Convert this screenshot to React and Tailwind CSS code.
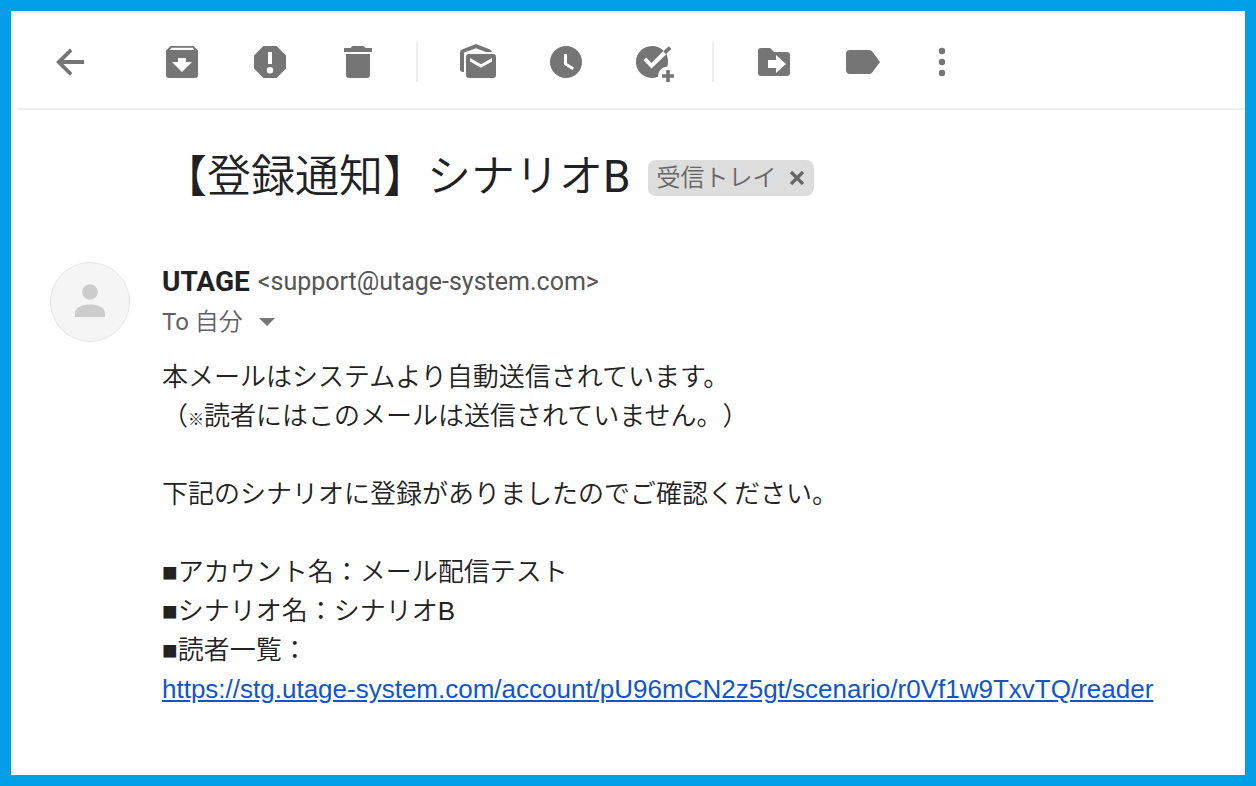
const icons = {
  back: <path d="M34 18H13.700L22.300 9.400 19.900 6.600 6 20 19.900 33.800 22.300 31 13.300 22H34z" />,
  archive: (
    <path
      fillRule="evenodd"
      d="M8.500 4h23L36 8.500V33a3 3 0 0 1-3 3H7a3 3 0 0 1-3-3V8.500zM9.500 5.800 7.800 8h24.400l-1.700-2.200zM16 16v4h-6l10 10 10-10h-6v-4z"
    />
  ),
  spam: (
    <path
      fillRule="evenodd"
      d="M13.400 4h13.200L36 13.400v13.200L26.600 36H13.400L4 26.600V13.400zM18 10v12h4V10zM20 25a3.200 3.200 0 1 0 0 6.400 3.200 3.200 0 0 0 0-6.400z"
    />
  ),
  trash: <path d="M6 6h6.500l2-2h11l2 2H34v4H6zM8 12h24v21a3 3 0 0 1-3 3H11a3 3 0 0 1-3-3z" />,
  unread: (
    <>
      <path d="M6 30H5a3 3 0 0 1-3-3V10.500Q2 8.200 4.500 7.200L18 2 31.500 7.200Q33.300 8 34 10H28L18 6.200 6 10.500z" />
      <path
        fillRule="evenodd"
        d="M11 12h24a3 3 0 0 1 3 3v18a3 3 0 0 1-3 3H11a3 3 0 0 1-3-3V15a3 3 0 0 1 3-3zM12 16v3.500l11 6.300 11-6.300V16l-11 6.300z"
      />
    </>
  ),
  snooze: (
    <path
      fillRule="evenodd"
      d="M20 4a16 16 0 1 0 0 32 16 16 0 0 0 0-32zM18 12h3v9.300l7 4.100-1.500 2.600L18 22.800z"
    />
  ),
  task: (
    <>
      <path
        fillRule="evenodd"
        d="M18 4c4.500 0 8.600 1.800 11.500 4.800L17.500 21l-5.300-5.400-2.700 2.600L17.500 26.500 32.500 12C33.500 14.500 34 17 34 20c0 1.500-.2 3-.6 4.400C27.500 25 24 29 24 34.800A16 16 0 1 1 18 4z"
      />
      <path d="M34.800 4.300 37.300 6.700 31.800 12.200 29.300 9.600z" />
      <path d="M32.200 28h3.600v4.200H40v3.600h-4.200V40h-3.600v-4.200H28v-3.600h4.200z" />
    </>
  ),
  move: (
    <path
      fillRule="evenodd"
      d="M7 6h9l4 4h13a3 3 0 0 1 3 3v18a3 3 0 0 1-3 3H7a3 3 0 0 1-3-3V9a3 3 0 0 1 3-3zM14 18v8h8v5l10-9-10-9v5z"
    />
  ),
  label: <path d="M8 8h19q2 0 3.200 1.600L38 20l-7.800 10.400Q29 32 27 32H8a4 4 0 0 1-4-4V12a4 4 0 0 1 4-4z" />,
  more: (
    <>
      <circle cx="20" cy="9" r="3.200" />
      <circle cx="20" cy="20" r="3.200" />
      <circle cx="20" cy="31" r="3.200" />
    </>
  ),
};

function IconButton({ icon, label }) {
  return (
    <button type="button" aria-label={label} className="size-10 shrink-0 text-[#757575]">
      <svg viewBox="0 0 40 40" className="size-10" fill="currentColor" aria-hidden="true">
        {icons[icon]}
      </svg>
    </button>
  );
}

function Separator() {
  return <div className="ml-[38px] mr-10 h-10 w-0.5 shrink-0 bg-[#ededed]" />;
}

function Toolbar() {
  return (
    <div role="toolbar" aria-label="メール操作" className="ml-[7px] flex h-24 items-center border-b-2 border-[#eeeeee] pl-8 pt-0.5">
      <IconButton icon="back" label="戻る" />
      <div className="ml-[72px] flex gap-12">
        <IconButton icon="archive" label="アーカイブ" />
        <IconButton icon="spam" label="迷惑メールを報告" />
        <IconButton icon="trash" label="削除" />
      </div>
      <Separator />
      <div className="flex gap-12">
        <IconButton icon="unread" label="未読にする" />
        <IconButton icon="snooze" label="スヌーズ" />
        <IconButton icon="task" label="ToDo リストに追加" />
      </div>
      <Separator />
      <div className="flex gap-12">
        <IconButton icon="move" label="移動" />
        <IconButton icon="label" label="ラベル" />
      </div>
      <div className="ml-10 flex">
        <IconButton icon="more" label="その他" />
      </div>
    </div>
  );
}

function Subject() {
  return (
    <div className="flex items-center pl-[152px] pt-[37px]">
      <h1 className="whitespace-nowrap text-[44px] font-[350] leading-[60px] text-[#202124]">
        【登録通知】シナリオ<span className="font-normal">B</span>
      </h1>
      <div className="ml-[18px] mt-0.5 flex h-9 items-center rounded-lg bg-[#dddddd] px-2 text-2xl leading-9 text-[#666666]">
        <span className="font-[350]">受信トレイ</span>
        <button type="button" aria-label="受信トレイのラベルを削除" className="ml-3">
          <svg viewBox="0 0 18 18" className="size-[18px]" stroke="currentColor" strokeWidth="3.200" aria-hidden="true">
            <path d="M3 3l12 12M15 3L3 15" />
          </svg>
        </button>
      </div>
    </div>
  );
}

function Avatar() {
  return (
    <div className="flex size-20 shrink-0 items-center justify-center rounded-full border border-[#e6e6e6] bg-[#f5f5f5]">
      <svg viewBox="0 0 80 80" className="size-20 shrink-0" fill="#cccccc" aria-hidden="true">
        <circle cx="40" cy="30" r="7.800" />
        <path d="M25 55v-4.500C25 45 34 42.500 40 42.500S55 45 55 50.500V55z" />
      </svg>
    </div>
  );
}

const readerUrl = "https://stg.utage-system.com/account/pU96mCN2z5gt/scenario/r0Vf1w9TxvTQ/reader";

function Message() {
  return (
    <article className="flex gap-8 pl-[39px] pr-10 pt-[55px]">
      <Avatar />
      <div className="min-w-0">
        <header>
          <div className="flex h-10 items-center gap-2 whitespace-nowrap leading-10">
            <span className="text-[28px] font-bold text-[#202124]">UTAGE</span>
            <span className="text-[25px] text-[#555555]">&lt;support@utage-system.com&gt;</span>
          </div>
          <button type="button" className="flex h-10 items-center text-2xl text-[#5f6368]">
            <span>
              To <span className="font-[350]">自分</span>
            </span>
            <svg viewBox="0 0 16 8" className="ml-4 h-2 w-4" fill="#757575" aria-hidden="true">
              <path d="M0 0h16L8 8z" />
            </svg>
          </button>
        </header>
        <div className="mt-4 font-['Liberation_Sans','Noto_Sans_CJK_JP',sans-serif] text-[26px] font-[350] leading-[39px] text-[#222222] [text-spacing-trim:space-all]">
          <p>本メールはシステムより自動送信されています。</p>
          <p>
            （<span className="text-base font-black">※</span>読者にはこのメールは送信されていません。）
          </p>
          <p className="mt-[39px]">下記のシナリオに登録がありましたのでご確認ください。</p>
          <p className="mt-[39px]">■アカウント名：メール配信テスト</p>
          <p>■シナリオ名：シナリオB</p>
          <p>■読者一覧：</p>
          <a href={readerUrl} className="text-[#1155cc] underline">
            {readerUrl}
          </a>
        </div>
      </div>
    </article>
  );
}

export default function App() {
  return (
    <main className="min-h-screen border-[11px] border-[#009fe8] bg-white font-['Roboto','Noto_Sans_CJK_JP',sans-serif]" lang="ja">
      <div className="mt-px h-0.5 bg-[#f3f3f3]" />
      <Toolbar />
      <Subject />
      <Message />
    </main>
  );
}
